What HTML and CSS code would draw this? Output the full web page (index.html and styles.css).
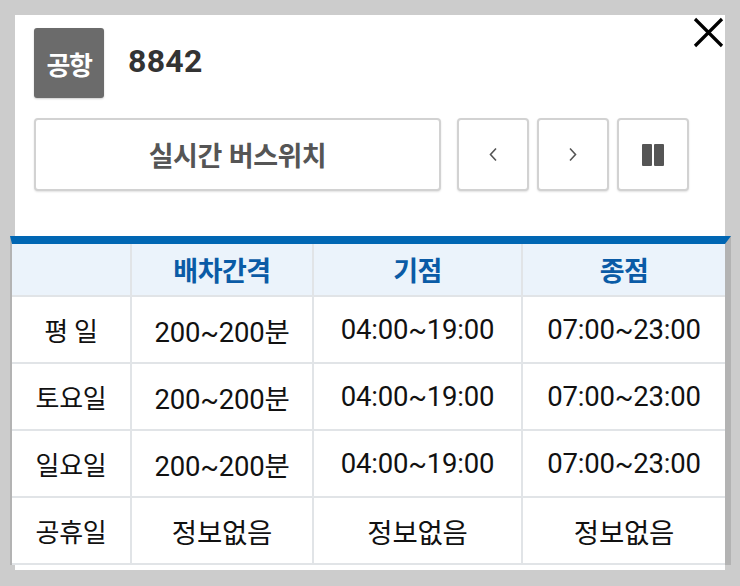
FILE: index.html
```html
<!DOCTYPE html>
<html lang="ko">
<head>
<meta charset="utf-8">
<link rel="stylesheet" href="styles.css">
</head>
<body>
<div class="panel">
  <button class="close" aria-label="닫기">
    <svg width="31" height="31" viewBox="0 0 31 31"><path d="M2 2 L29 29 M29 2 L2 29" stroke="#000" stroke-width="3.2" fill="none"/></svg>
  </button>
  <div class="head">
    <span class="badge">공항</span>
    <span class="route">8842</span>
  </div>
  <div class="controls">
    <button class="btn wide">실시간 버스위치</button>
    <button class="btn sq" aria-label="이전">
      <svg width="10" height="15" viewBox="0 0 10 15"><path d="M8 1.5 L2.5 7.5 L8 13.5" stroke="#555" stroke-width="1.6" fill="none"/></svg>
    </button>
    <button class="btn sq" aria-label="다음">
      <svg width="10" height="15" viewBox="0 0 10 15"><path d="M2 1.5 L7.5 7.5 L2 13.5" stroke="#555" stroke-width="1.6" fill="none"/></svg>
    </button>
    <button class="btn sq" aria-label="일시정지">
      <svg width="22" height="22" viewBox="0 0 22 22"><rect x="0" y="0" width="10" height="22" rx="1" fill="#555"/><rect x="12" y="0" width="10" height="22" rx="1" fill="#555"/></svg>
    </button>
  </div>
  <table class="sched">
    <colgroup>
      <col class="c1"><col class="c2"><col class="c3"><col class="c4">
    </colgroup>
    <thead>
      <tr><th></th><th>배차간격</th><th>기점</th><th>종점</th></tr>
    </thead>
    <tbody>
      <tr><td>평 일</td><td>200~200분</td><td>04:00~19:00</td><td>07:00~23:00</td></tr>
      <tr><td>토요일</td><td>200~200분</td><td>04:00~19:00</td><td>07:00~23:00</td></tr>
      <tr><td>일요일</td><td>200~200분</td><td>04:00~19:00</td><td>07:00~23:00</td></tr>
      <tr><td>공휴일</td><td>정보없음</td><td>정보없음</td><td>정보없음</td></tr>
    </tbody>
  </table>
</div>
</body>
</html>
```
FILE: styles.css
```css
html, body {
  margin: 0;
  padding: 0;
  background: #cccccc;
}
body {
  font-family: Roboto, "Noto Sans CJK KR", sans-serif;
  color: #111;
}
.panel {
  position: relative;
  margin: 15px 0 0 15px;
  width: 710px;
  height: 555px;
  background: #fff;
  box-sizing: border-box;
  padding: 13px 0 0 19px;
}
.close {
  position: absolute;
  top: 2px;
  right: 1px;
  width: 31px;
  height: 31px;
  padding: 0;
  border: 0;
  background: transparent;
  display: block;
}
.close svg { display: block; }
.head {
  display: flex;
  align-items: center;
  gap: 24px;
}
.badge {
  width: 70px;
  height: 70px;
  background: #6b6b6b;
  border-radius: 3px;
  box-shadow: 0 1px 2px rgba(0,0,0,0.2);
  color: #fff;
  font-family: "Noto Sans CJK KR", sans-serif;
  font-weight: 700;
  font-size: 26px;
  display: flex;
  align-items: center;
  justify-content: center;
  letter-spacing: -1.5px;
}
.route {
  font-family: Roboto, "Noto Sans CJK KR", sans-serif;
  font-weight: 700;
  font-size: 32px;
  color: #333;
  letter-spacing: 0.3px;
  margin-top: -4px;
}
.controls {
  display: flex;
  margin-top: 20px;
  gap: 8px;
}
.btn {
  height: 73px;
  box-sizing: border-box;
  background: #fff;
  border: 2px solid #d2d2d2;
  border-radius: 4px;
  box-shadow: 0 1px 2px rgba(0,0,0,0.12);
  padding: 0;
  display: flex;
  align-items: center;
  justify-content: center;
  font-family: "Noto Sans CJK KR", sans-serif;
}
.btn.wide {
  width: 407px;
  margin-right: 8px;
  font-size: 27px;
  font-weight: 700;
  color: #555;
  letter-spacing: -0.5px;
}
.btn.sq { width: 72px; }
.btn svg { display: block; }
.sched {
  margin: 45px 0 0 -24px;
  border-collapse: separate;
  border-spacing: 0;
  border-top: 8px solid #0066b3;
  border-left: 2px solid rgba(0,0,0,0.12);
  border-right: 6px solid rgba(0,0,0,0.12);
  table-layout: fixed;
  width: 721px;
}
.sched col.c1 { width: 120px; }
.sched col.c2 { width: 182px; }
.sched col.c3 { width: 209px; }
.sched col.c4 { width: 202px; }
.sched th, .sched td {
  padding: 0;
  text-align: center;
  border-bottom: 2px solid #e1e4e7;
  border-right: 2px solid #e1e4e7;
}
.sched th:last-child, .sched td:last-child { border-right: 0; }
.sched th {
  height: 51px;
  background: #ebf3fb;
  color: #0a5ba6;
  font-family: "Noto Sans CJK KR", sans-serif;
  font-weight: 700;
  font-size: 27px;
  letter-spacing: -0.5px;
}
.sched td {
  height: 65px;
  font-size: 27.5px;
  color: #111;
  background: #fff;
  letter-spacing: -0.2px;
}
.sched td:first-child { font-size: 26px; }
```
